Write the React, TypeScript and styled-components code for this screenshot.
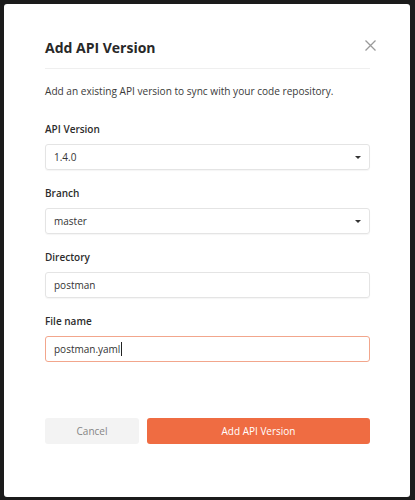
import styled, { createGlobalStyle } from "styled-components";

const Global = createGlobalStyle`
  html, body {
    margin: 0;
    padding: 0;
    background: #1b1b1b;
  }
  body {
    font-family: "Open Sans", "Liberation Sans", sans-serif;
  }
`;

const Page = styled.div`
  padding: 4px 5px 3px 4px;
  height: 500px;
  box-sizing: border-box;
  display: flex;
`;

const Modal = styled.div`
  flex: 1;
  background: #fff;
  border-radius: 3px;
  padding: 33px 40px 0 41px;
  display: flex;
  flex-direction: column;
`;

const Header = styled.div`
  display: flex;
  align-items: flex-start;
  justify-content: space-between;
  padding-bottom: 10px;
  border-bottom: 1px solid #efefef;
`;

const Title = styled.h2`
  margin: 0;
  font-size: 14px;
  line-height: 21px;
  font-weight: 700;
  color: #282828;
`;

const Close = styled.button`
  border: 0;
  background: none;
  padding: 0;
  width: 11px;
  height: 11px;
  margin: 3px -6px 0 0;
  display: flex;
  cursor: pointer;
`;

const Description = styled.p`
  margin: 15px 0 24px;
  font-size: 10.1px;
  line-height: 14px;
  color: #3a3a3a;
`;

const Field = styled.div`
  display: flex;
  flex-direction: column;
  margin-bottom: 16px;
`;

const Label = styled.label`
  font-size: 10px;
  line-height: 14px;
  font-weight: 600;
  color: #2c2c2c;
  margin-bottom: 8px;
`;

const Box = styled.div<{ $focused?: boolean }>`
  height: 26px;
  box-sizing: border-box;
  border: 1px solid ${(p) => (p.$focused ? "#f2a68c" : "#e4e4e4")};
  border-radius: 3px;
  box-shadow: ${(p) => (p.$focused ? "none" : "0 1px 1px rgba(0,0,0,0.04)")};
  display: flex;
  align-items: center;
  justify-content: space-between;
  padding: 0 8px;
  font-size: 10px;
  color: #333;
`;

const Caret = styled.span`
  width: 0;
  height: 0;
  border-left: 3px solid transparent;
  border-right: 3px solid transparent;
  border-top: 3px solid #333;
`;

const Cursor = styled.span`
  display: inline-block;
  width: 1px;
  height: 14px;
  background: #222;
  vertical-align: -3px;
  margin-left: 1px;
`;

const Actions = styled.div`
  display: flex;
  gap: 8px;
  margin-top: 40px;
`;

const Button = styled.button<{ $primary?: boolean }>`
  height: 26px;
  border: 0;
  border-radius: 3px;
  font-family: inherit;
  font-size: 10px;
  background: ${(p) => (p.$primary ? "#ef6c42" : "#f3f3f3")};
  color: ${(p) => (p.$primary ? "#fff" : "#858585")};
  width: ${(p) => (p.$primary ? "auto" : "94px")};
  flex: ${(p) => (p.$primary ? 1 : "none")};
  cursor: pointer;
`;

export default function App() {
  return (
    <>
      <Global />
      <Page>
        <Modal>
          <Header>
            <Title>Add API Version</Title>
            <Close aria-label="Close">
              <svg width="11" height="11" viewBox="0 0 11 11">
                <path d="M0.5 0.5L10.5 10.5M10.5 0.5L0.5 10.5" stroke="#9a9a9a" strokeWidth="1.3" />
              </svg>
            </Close>
          </Header>
          <Description>
            Add an existing API version to sync with your code repository.
          </Description>
          <Field>
            <Label>API Version</Label>
            <Box>
              1.4.0
              <Caret />
            </Box>
          </Field>
          <Field>
            <Label>Branch</Label>
            <Box>
              master
              <Caret />
            </Box>
          </Field>
          <Field>
            <Label>Directory</Label>
            <Box>postman</Box>
          </Field>
          <Field>
            <Label>File name</Label>
            <Box $focused>
              <span>
                postman.yaml
                <Cursor />
              </span>
            </Box>
          </Field>
          <Actions>
            <Button>Cancel</Button>
            <Button $primary>Add API Version</Button>
          </Actions>
        </Modal>
      </Page>
    </>
  );
}
